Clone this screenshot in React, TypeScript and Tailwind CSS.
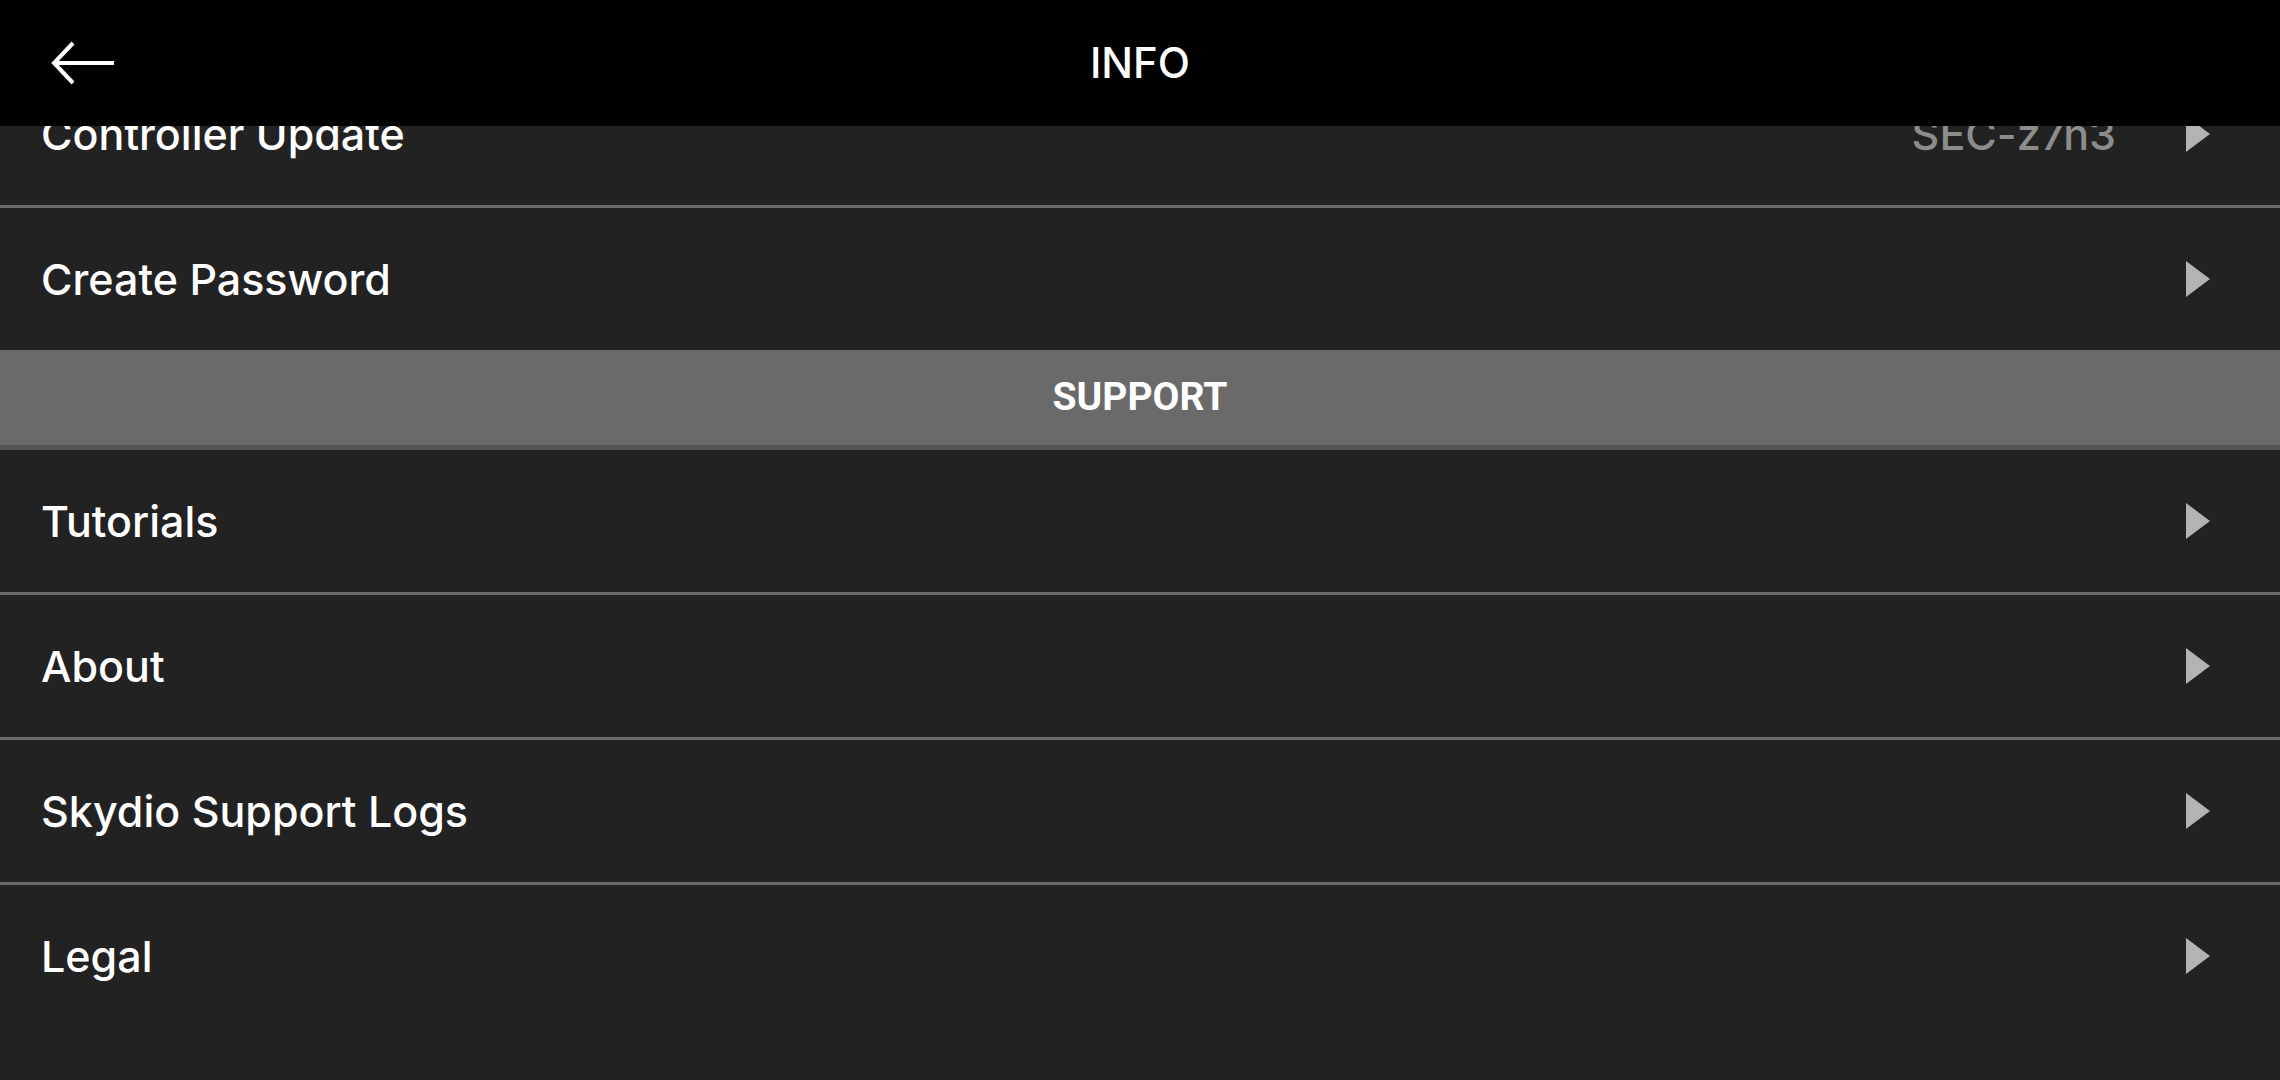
import React from "react";

type Row = { label: string; value?: string };

const SETTINGS: Row[] = [
  { label: "Controller Update", value: "SEC-z7n3" },
  { label: "Create Password" },
];

const SUPPORT: Row[] = [
  { label: "Tutorials" },
  { label: "About" },
  { label: "Skydio Support Logs" },
  { label: "Legal" },
];

function BackArrow() {
  return (
    <svg width="70" height="46" viewBox="0 0 70 46" fill="none" aria-hidden>
      <path
        d="M66 23H6M25 3L6 23L25 43"
        stroke="white"
        strokeWidth="4"
        strokeLinejoin="miter"
      />
    </svg>
  );
}

function Chevron() {
  return (
    <svg width="24" height="36" viewBox="0 0 24 36" aria-hidden>
      <path d="M0 0L24 18L0 36Z" fill="#b3b3b3" />
    </svg>
  );
}

function ListRow({ row, last }: { row: Row; last?: boolean }) {
  return (
    <div
      className={
        "flex items-center pl-[41px] pr-[70px] " +
        (last ? "h-[142px]" : "h-[145px] border-b-[3px] border-[#6a6a6a]")
      }
    >
      <span className="flex-1 text-[43px] font-medium leading-none text-white">
        {row.label}
      </span>
      {row.value && (
        <span className="mr-[70px] text-[43px] font-medium leading-none text-[#8c8c8c]">
          {row.value}
        </span>
      )}
      <Chevron />
    </div>
  );
}

export default function App() {
  return (
    <div
      className="relative h-[1080px] w-[2280px] overflow-hidden bg-[#222222]"
      style={{ fontFamily: "Inter, 'Noto Sans', sans-serif" }}
    >
      <div className="pt-[63px]">
        {SETTINGS.map((r, i) => (
          <ListRow key={r.label} row={r} last={i === SETTINGS.length - 1} />
        ))}
        <div className="flex h-[100px] items-center justify-center border-b-[5px] border-[#555555] bg-[#6a6a6a]">
          <span className="font-['Roboto',sans-serif] text-[39px] font-bold text-white">
            SUPPORT
          </span>
        </div>
        {SUPPORT.map((r, i) => (
          <ListRow key={r.label} row={r} last={i === SUPPORT.length - 1} />
        ))}
      </div>

      <div className="absolute inset-x-0 top-0 flex h-[126px] items-center justify-center bg-black">
        <button type="button" className="absolute left-[48px] top-[40px]">
          <BackArrow />
        </button>
        <span className="text-[42px] font-medium leading-none text-white">INFO</span>
      </div>
    </div>
  );
}
